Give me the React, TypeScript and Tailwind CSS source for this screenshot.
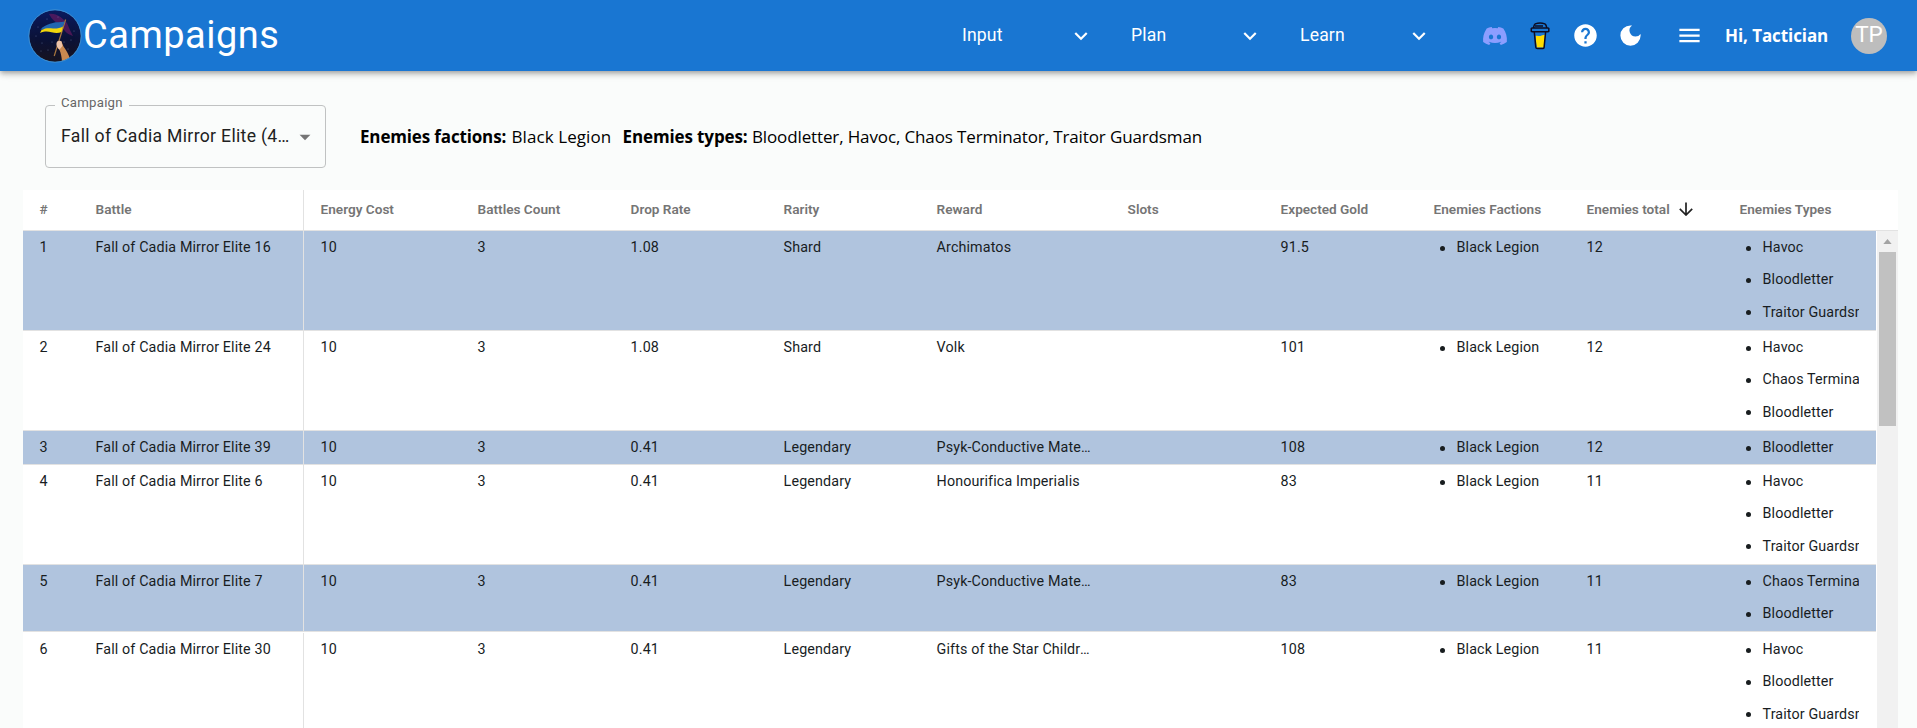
import type { ReactNode } from "react";
import { MdArrowDropDown, MdDarkMode, MdExpandMore, MdHelp, MdMenu } from "react-icons/md";
import { FaDiscord } from "react-icons/fa";

const GRID =
  "grid grid-cols-[56px_225px_157px_153px_153px_153px_191px_153px_153px_153px_153px_153px]";

const columns = [
  "#",
  "Battle",
  "Energy Cost",
  "Battles Count",
  "Drop Rate",
  "Rarity",
  "Reward",
  "Slots",
  "Expected Gold",
  "Enemies Factions",
  "Enemies total",
  "Enemies Types",
];

type Row = {
  battle: number;
  drop: string;
  rarity: string;
  reward: string;
  gold: string;
  total: number;
  types: string[];
  size: string;
};

const rows: Row[] = [
  { battle: 16, drop: "1.08", rarity: "Shard", reward: "Archimatos", gold: "91.5", total: 12, types: ["Havoc", "Bloodletter", "Traitor Guardsman"], size: "h-[100px]" },
  { battle: 24, drop: "1.08", rarity: "Shard", reward: "Volk", gold: "101", total: 12, types: ["Havoc", "Chaos Terminator", "Bloodletter"], size: "h-[100px]" },
  { battle: 39, drop: "0.41", rarity: "Legendary", reward: "Psyk-Conductive Materiel", gold: "108", total: 12, types: ["Bloodletter"], size: "h-[34px]" },
  { battle: 6, drop: "0.41", rarity: "Legendary", reward: "Honourifica Imperialis", gold: "83", total: 11, types: ["Havoc", "Bloodletter", "Traitor Guardsman"], size: "h-[100px]" },
  { battle: 7, drop: "0.41", rarity: "Legendary", reward: "Psyk-Conductive Materiel", gold: "83", total: 11, types: ["Chaos Terminator", "Bloodletter"], size: "h-[67px]" },
  { battle: 30, drop: "0.41", rarity: "Legendary", reward: "Gifts of the Star Children", gold: "108", total: 11, types: ["Havoc", "Bloodletter", "Traitor Guardsman"], size: "h-[101px] pt-px" },
];

function Cell({ children }: { children?: ReactNode }) {
  return <div className="min-w-0 truncate pr-[18px] pl-[16.6px]">{children}</div>;
}

function BulletList({ items }: { items: string[] }) {
  return (
    <div className="min-w-0 overflow-hidden px-[17px]">
      <div className="overflow-hidden">
        {items.map((item) => (
          <div key={item} className="flex h-[32.3px] items-start whitespace-nowrap">
            <span className="mt-[14.5px] mr-[12px] ml-[5.5px] size-[5px] shrink-0 rounded-full bg-[#181d1f]" />
            {item}
          </div>
        ))}
      </div>
    </div>
  );
}

function Logo() {
  return (
    <svg viewBox="0 0 54 54" className="size-[54px] shrink-0">
      <defs>
        <linearGradient id="sky" x1="0" y1="0" x2="0" y2="1">
          <stop offset="0" stopColor="#0a1a5e" />
          <stop offset="0.55" stopColor="#0b1238" />
          <stop offset="1" stopColor="#17131f" />
        </linearGradient>
        <clipPath id="disc">
          <circle cx="27" cy="27" r="26" />
        </clipPath>
      </defs>
      <circle cx="27" cy="27" r="26" fill="url(#sky)" />
      <g clipPath="url(#disc)">
        <path d="M21 5c8-1 13 4 18 9 2 5 4 9 6 13-7-2-10-7-12-12-5-1-9-4-12-10z" fill="#6d1a63" opacity="0.65" />
        <g fill="#8ea0cf" opacity="0.6">
          <circle cx="10" cy="18" r=".5" /><circle cx="14" cy="34" r=".5" /><circle cx="20" cy="41" r=".5" />
          <circle cx="8" cy="27" r=".5" /><circle cx="19" cy="10" r=".5" /><circle cx="43" cy="31" r=".5" />
          <circle cx="46" cy="22" r=".5" /><circle cx="24" cy="33" r=".5" /><circle cx="40" cy="40" r=".5" />
          <circle cx="13" cy="42" r=".5" /><circle cx="36" cy="33" r=".5" /><circle cx="30" cy="8" r=".5" />
        </g>
        <path d="M37.6 10.5 26.2 47" stroke="#a8763f" strokeWidth="1.2" />
        <path d="M36.8 12.5c-5 1-8 .2-12 1.500-4 1-7 2-10.500 4.500l-2 2.500c5-1.500 8-1 12.500-.5 4 .2 7-1 10-2.500z" fill="#2166b0" />
        <path d="M35 17.500c-3 1.500-6 2.200-10 2-4-.3-7-.7-11.500 1.500l-1.500 3c5-2 8-1.500 11.500-.7 4 1 7.500 .9 10 -.3z" fill="#f2d60c" />
        <path d="M29 33.500c.5-2 3-2.500 4.500-1l2 5c3 4 5 8 6.500 12l-8 3c-.5-5-1-8-2.500-11.500-2-2-3-4-2.500-7.500z" fill="#c98950" />
        <path d="M28.500 34c.5-2 3.500-3 5-1.500l1 4.500-3 3.500c-2-1.500-3.500-3.500-3-6.500z" fill="#edc3a8" />
      </g>
      <circle cx="27" cy="27" r="26.200" fill="none" stroke="#3f8fd0" strokeWidth="1" />
    </svg>
  );
}

function CoffeeCup() {
  return (
    <svg viewBox="0 0 20 28" className="h-[28px] w-[20px]">
      <path d="M4.800 10.500h10.600l-1.300 14.800c-.1.900-.6 1.200-1.400 1.200H7.600c-.9 0-1.300-.4-1.400-1.200z" fill="#1976d2" />
      <path d="M5.500 14c1.500-.8 3.500.4 5 0 1.800-.5 3-1.500 4.400-1.100L13.900 25.500H6.700z" fill="#ffdd00" />
      <path
        d="M4.300 10.200 5.800 25.300c.1.900.7 1.300 1.600 1.300h5.200c.9 0 1.400-.4 1.500-1.300l1.500-15.100M1.300 6.400l1-.4h15.500l1 .4v2.900l-1 .5H2.300l-1-.5zM3.500 5.800c.3-1.600.5-3.200 1.700-3.900 2.800-.9 7-.9 9.700 0 1.100.7 1.600 2.300 1.900 3.900M5 3.900h8"
        fill="none"
        stroke="#0d0c22"
        strokeWidth="1.500"
        strokeLinejoin="round"
      />
    </svg>
  );
}

function NavItem({ label }: { label: string }) {
  return (
    <div className="flex w-[169px] items-center justify-between pr-[37.5px]">
      <span className="-mt-px text-[17.6px] leading-6 tracking-[0.16px]">{label}</span>
      <MdExpandMore className="size-[26px]" />
    </div>
  );
}

export default function App() {
  return (
    <div className="flex h-[728px] w-[1917px] flex-col overflow-hidden bg-[#fafcfb] font-[Roboto,sans-serif]">
      <header className="z-10 flex h-[71px] shrink-0 items-center bg-[#1976d2] pl-[28px] text-white shadow-[0_2px_4px_-1px_rgba(0,0,0,0.2),0_4px_5px_0_rgba(0,0,0,0.14),0_1px_10px_0_rgba(0,0,0,0.12)]">
        <Logo />
        <h1 className="w-[880px] pb-[2px] pl-px text-[38px] leading-[46px] tracking-[0.5px]">Campaigns</h1>
        <nav className="flex w-[520px]">
          <NavItem label="Input" />
          <NavItem label="Plan" />
          <NavItem label="Learn" />
        </nav>
        <div className="flex items-center">
          <FaDiscord className="size-[26px] text-[#8c9eff]" />
          <div className="ml-[22px]"><CoffeeCup /></div>
          <MdHelp className="ml-[22px] size-[27px]" />
          <MdDarkMode className="ml-[18px] size-[27px]" />
          <MdMenu className="ml-[32px] size-[27px]" />
          <span className="ml-[22px] w-[126px] font-['Open_Sans',sans-serif] text-[17px] leading-6 font-bold tracking-[-0.08px] whitespace-nowrap">
            Hi, Tactician
          </span>
          <div className="flex size-[36px] items-center justify-center rounded-full bg-[#bdbdbd] pb-[2px] text-[22.5px] leading-none">
            TP
          </div>
        </div>
      </header>

      <section className="flex h-[119px] shrink-0 pt-[34px] pl-[45px]">
        <fieldset className="h-[71px] w-[281px] -translate-y-[8px] rounded-[4px] border border-[#c0c2c2] pl-[9px]">
          <legend className="px-[6px] text-[13.2px] leading-[16px] tracking-[0.25px] text-[#666]">
            <span className="inline-block -translate-y-[2px]">Campaign</span>
          </legend>
          <div className="flex items-center pt-[9px] pl-[6px]">
            <span className="w-[230.5px] truncate text-[17.6px] leading-[26px] tracking-[0.32px] text-[#212121]">
              Fall of Cadia Mirror Elite (40/40)
            </span>
            <MdArrowDropDown className="mt-[2px] size-[26px] text-[#757575]" />
          </div>
        </fieldset>
        <p className="flex pt-[19px] pl-[34px] font-['Open_Sans',sans-serif] text-[17px] leading-[26px] whitespace-nowrap text-black">
          <b className="w-[151.5px] tracking-[-0.15px]">Enemies factions:</b>
          <span className="w-[111px] tracking-[0.08px]">Black Legion</span>
          <b className="w-[129.5px] tracking-[-0.12px]">Enemies types:</b>
          <span className="tracking-[-0.13px]">Bloodletter, Havoc, Chaos Terminator, Traitor Guardsman</span>
        </p>
      </section>

      <main className="ml-[23px] flex w-[1875px] grow flex-col bg-white">
        <div className={`${GRID} h-[41px] shrink-0 border-b border-[#e2e2e2] text-[13.6px] font-semibold text-[#757575]`}>
          {columns.map((name, i) => (
            <div
              key={name}
              className={`flex items-center pb-[2px] pl-[16.6px] whitespace-nowrap ${i === 1 ? "border-r border-[#e2e2e2]" : ""}`}
            >
              {name}
              {name === "Enemies total" && (
                <svg viewBox="0 0 14 14" className="ml-[9px] size-[14px]" fill="none" stroke="#212121" strokeWidth="1.700">
                  <path d="M7 .5v12.500M.8 6.900 7 13l6.200-6.100" />
                </svg>
              )}
            </div>
          ))}
        </div>
        <div className="flex grow">
          <div className="w-[1853px]">
            {rows.map((row, i) => (
              <div
                key={row.battle}
                className={`${GRID} ${row.size} overflow-hidden border-b border-[#e2e2e2] text-[14.3px] leading-[33px] tracking-[0.13px] text-[#181d1f] ${
                  i % 2 === 0 ? "bg-[#b0c4de]" : "bg-white"
                }`}
              >
                <Cell>{i + 1}</Cell>
                <div className="border-r border-[#e2e2e2] pl-[16.5px] whitespace-nowrap">Fall of Cadia Mirror Elite {row.battle}</div>
                <Cell>10</Cell>
                <Cell>3</Cell>
                <Cell>{row.drop}</Cell>
                <Cell>{row.rarity}</Cell>
                <Cell>{row.reward}</Cell>
                <Cell />
                <Cell>{row.gold}</Cell>
                <BulletList items={["Black Legion"]} />
                <Cell>{row.total}</Cell>
                <BulletList items={row.types} />
              </div>
            ))}
          </div>
          <div className="flex w-[22px] flex-col items-center border-l border-white bg-[#f1f1f1]">
            <div className="flex h-[21px] items-center justify-center">
              <svg viewBox="0 0 10 6" className="h-[5px] w-[9px]">
                <path d="M0 6 5 0l5 6z" fill="#a3a3a3" />
              </svg>
            </div>
            <div className="h-[174px] w-[17px] bg-[#c1c1c1]" />
          </div>
        </div>
      </main>
    </div>
  );
}
